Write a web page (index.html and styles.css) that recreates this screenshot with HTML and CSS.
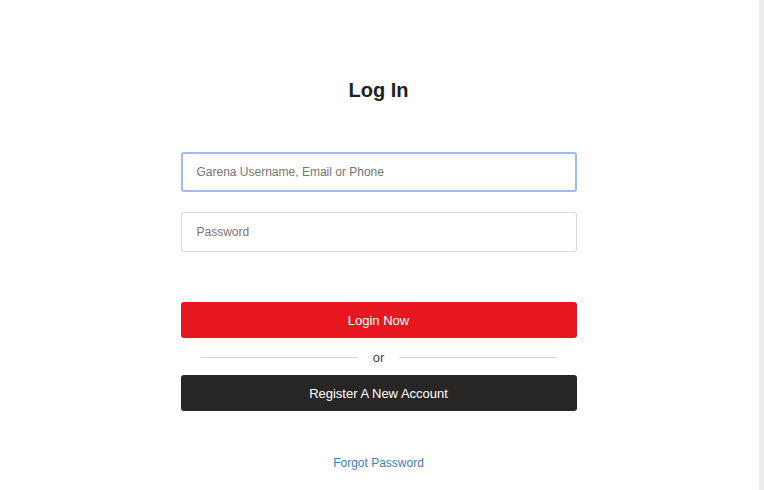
FILE: index.html
```html
<!DOCTYPE html>
<html lang="en">
<head>
    <meta charset="UTF-8">
    <meta name="viewport" content="width=device-width, initial-scale=1.0">
    <title>Log In</title>
    <link rel="stylesheet" href="styles.css">
</head>
<body>

<div class="page">
    <div class="main">
        <div class="login-box">
            <h1 class="title">Log In</h1>

            <form class="login-form">
                <input class="field focused" type="text" placeholder="Garena Username, Email or Phone">
                <input class="field" type="password" placeholder="Password">

                <button type="button" class="btn btn-login">Login Now</button>

                <div class="divider">
                    <span class="divider-line"></span>
                    <span class="divider-text">or</span>
                    <span class="divider-line"></span>
                </div>

                <button type="button" class="btn btn-register">Register A New Account</button>
            </form>

            <a class="forgot-link" href="#">Forgot Password</a>
        </div>
    </div>
    <div class="edge"></div>
</div>

</body>
</html>
```

FILE: styles.css
```css
body {
    margin: 0;
    font-family: "Liberation Sans", Arial, sans-serif;
    background-color: #ffffff;
}

.page {
    display: flex;
    min-height: 490px;
}

.main {
    flex: 1;
    display: flex;
    justify-content: center;
    padding-right: 2px;
}

.edge {
    width: 5px;
    background-color: #eeedeb;
}

.login-box {
    width: 396px;
    padding-top: 78px;
    display: flex;
    flex-direction: column;
    align-items: center;
}

.title {
    margin: 0;
    font-size: 20px;
    line-height: 24px;
    font-weight: bold;
    color: #222222;
}

.login-form {
    width: 100%;
    margin-top: 50px;
    display: flex;
    flex-direction: column;
}

.field {
    box-sizing: border-box;
    width: 100%;
    height: 40px;
    margin: 0 0 20px 0;
    padding: 0 15px;
    border: 1px solid #d9d9d9;
    border-radius: 3px;
    font-family: inherit;
    font-size: 12px;
    color: #333333;
    outline: none;
}

.field::placeholder {
    color: #757575;
}

.field.focused {
    border: 2px solid #9bbcf2;
    padding: 0 14px;
}

.btn {
    width: 100%;
    height: 36px;
    border: none;
    border-radius: 3px;
    font-family: inherit;
    font-size: 13px;
    color: #ffffff;
    cursor: pointer;
}

.btn-login {
    margin-top: 30px;
    background-color: #e8171f;
}

.btn-register {
    background-color: #272625;
}

.divider {
    height: 37px;
    box-sizing: border-box;
    padding: 2px 20px 0 20px;
    display: flex;
    align-items: center;
}

.divider-line {
    flex: 1;
    height: 1px;
    background-color: #d4d4d8;
}

.divider-text {
    padding: 0 15px;
    font-size: 13px;
    color: #444444;
}

.forgot-link {
    margin-top: 44px;
    font-size: 12px;
    line-height: 16px;
    color: #3f7cc6;
    text-decoration: none;
}
```
